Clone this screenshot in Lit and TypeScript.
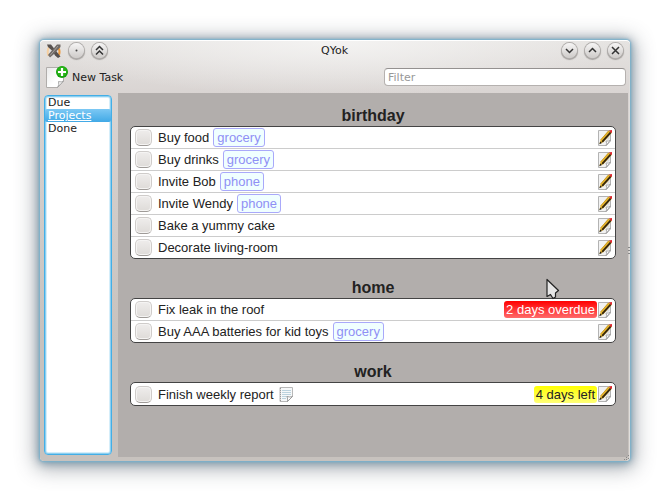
import { LitElement, html, css, svg, nothing } from "lit";
import { customElement, property, state } from "lit/decorators.js";
import { classMap } from "lit/directives/class-map.js";

interface Task {
  title: string;
  tag?: string;
  note?: boolean;
  due?: { text: string; level: "late" | "soon" };
}
interface Project {
  name: string;
  tasks: Task[];
}

const PROJECTS: Project[] = [
  {
    name: "birthday",
    tasks: [
      { title: "Buy food", tag: "grocery" },
      { title: "Buy drinks", tag: "grocery" },
      { title: "Invite Bob", tag: "phone" },
      { title: "Invite Wendy", tag: "phone" },
      { title: "Bake a yummy cake" },
      { title: "Decorate living-room" },
    ],
  },
  {
    name: "home",
    tasks: [
      { title: "Fix leak in the roof", due: { text: "2 days overdue", level: "late" } },
      { title: "Buy AAA batteries for kid toys", tag: "grocery" },
    ],
  },
  {
    name: "work",
    tasks: [{ title: "Finish weekly report", note: true, due: { text: "4 days left", level: "soon" } }],
  },
];

const appIcon = html`<svg class="app-icon" width="16" height="16" viewBox="0 0 16 16" aria-hidden="true">
  <path d="M3.500 3Q0.500 8 2.500 13" fill="none" stroke="#f6cfa0" stroke-width="2" />
  <path d="M12 4Q14.500 8 13 12" fill="none" stroke="#ee9a3c" stroke-width="2" />
  <path d="M1 1.500L5 1.500L14.500 13.500L12 15L9 12.500L6.500 8L2 4Z" fill="#57514e" />
  <path d="M14.500 1.500L11 1.500L2 12L4 14.500L8 11L14.500 4Z" fill="#6f6965" />
  <path d="M12 3L4 12.500" stroke="#a7a19d" stroke-width="1" />
</svg>`;

const newIcon = html`<svg width="24" height="24" viewBox="0 0 24 24" aria-hidden="true">
  <defs>
    <linearGradient id="pg" x1="0" y1="0" x2="1" y2="1">
      <stop offset="0" stop-color="#e9e9e9" /><stop offset=".6" stop-color="#fff" />
    </linearGradient>
  </defs>
  <path d="M0.500 2.500H17.500V16L11.500 22.500H0.500Z" fill="url(#pg)" stroke="#b0adab" />
  <path d="M11.500 22.500Q13.500 20 12.500 16.500Q15.500 17.500 17.500 16Z" fill="#f4f4f4" stroke="#999" stroke-width=".8" />
  <circle cx="16" cy="7" r="6" fill="#14a00c" />
  <circle cx="16" cy="6.500" r="5" fill="#35c21f" opacity=".6" />
  <path d="M16 3V11M12 7H20" stroke="#fff" stroke-width="2.200" />
</svg>`;

const editIcon = html`<svg width="16" height="18" viewBox="0 0 16 18" aria-hidden="true">
  <path d="M1.500 1.500H13.500V12L9.500 16.500H1.500Z" fill="#f2f2f2" stroke="#b3b3b3" />
  <path d="M9 16.500Q10.300 14.500 9 12Q12 12.500 13.500 11Z" fill="#fff" stroke="#999" stroke-width=".8" />
  <path d="M9 9.500L12.500 6V10.500H9Z" fill="#dcdcdc" />
  <path d="M11.500 1.500L15 3.500L6.500 13L2.500 15L3.500 11Z" fill="#e8b62c" />
  <path d="M13.700 3.300L5.200 12.800" stroke="#33260f" stroke-width="1.800" />
  <path d="M11.500 2L3.500 11" stroke="#c2931f" stroke-width=".8" />
  <path d="M3.200 12.500L2.300 15.300L5 14Z" fill="#222" />
  <path d="M12 1.500L15 1V3.500L14 4Z" fill="#e02630" />
</svg>`;

const noteIcon = html`<svg class="note" width="15" height="17" viewBox="0 0 15 17" role="img" aria-label="Has a note">
  <path d="M1 1.500H13.500V10.500L8.500 15.500H1Z" fill="#f6f8f9" stroke="#b8b8b8" />
  <path d="M3 4.500H12M3 6.500H12M3 8.500H12M3 10.500H8M3 12.500H7" stroke="#bcd3de" />
  <path d="M1.500 2V15.500" stroke="#999" stroke-dasharray="1 1" />
  <path d="M8.500 15.500Q9 13 8 10.500Q11 11.500 13.500 10.500Z" fill="#fff" stroke="#8a8a8a" stroke-width=".8" />
</svg>`;

const glyphs: Record<string, unknown> = {
  Menu: svg`<circle cx="8.500" cy="8.500" r="1" fill="#444" />`,
  Shade: svg`<path d="M5 8L8.500 4.500L12 8M5 12.500L8.500 9L12 12.500" />`,
  Minimize: svg`<path d="M5 7L8.500 10.500L12 7" />`,
  Maximize: svg`<path d="M5 10L8.500 6.500L12 10" />`,
  Close: svg`<path d="M5 5L12 12M12 5L5 12" />`,
};

@customElement("window-button")
export class WindowButton extends LitElement {
  @property() kind = "Close";
  static styles = css`
    :host { display: block; }
    button {
      display: block; width: 15px; height: 15px; padding: 0; border: 0; border-radius: 50%;
      background: linear-gradient(#f6f5f5, #cecbc9);
      box-shadow: 0 0 0 1px #b1aeac, 0 1px 1px 1px #a5a19f;
    }
    svg { display: block; width: 15px; height: 15px; fill: none; stroke: #333; stroke-width: 1.5; }
    .menu { stroke: none; }
  `;
  render() {
    return html`<button aria-label=${this.kind}>
      <svg class=${this.kind.toLowerCase()} viewBox="1 1 15 15" aria-hidden="true">${glyphs[this.kind]}</svg>
    </button>`;
  }
}

@customElement("task-row")
export class TaskRow extends LitElement {
  @property({ attribute: false }) task!: Task;
  static styles = css`
    :host { display: block; }
    .row { display: flex; align-items: center; height: 21px; padding: 0 2px 0 4px; }
    .row.tall { height: 22px; }
    label { display: flex; align-items: center; gap: 6px; white-space: pre; }
    input {
      appearance: none; box-sizing: border-box; width: 17px; height: 17px; margin: 0; border-radius: 5px;
      border: 1px solid #cfccca; border-bottom-color: #9f9b98;
      background: linear-gradient(#efedec, #dedbd8); box-shadow: inset 0 0 0 1px #f5f4f3;
    }
    .tag {
      box-sizing: border-box; height: 19px; margin-left: 4px; padding: 0 3px; line-height: 18px;
      color: #8f8ff5; background: #f0ffff; border: 1px solid #a9a9fa; border-radius: 3px;
      text-decoration: none;
    }
    .note { margin-left: 5px; }
    .due { margin-left: auto; height: 17px; padding: 0 2px; line-height: 17px; border-radius: 3px; }
    .late { color: #fff; background: linear-gradient(#f00, #ff6a6a); }
    .soon { color: #222; background: linear-gradient(#ff0, #ffff78); }
    .edit { display: block; margin-left: auto; padding: 0; border: 0; background: none; }
    .due + .edit { margin-left: 0; }
    .edit svg { display: block; }
  `;
  render() {
    const { title, tag, note, due } = this.task;
    return html`<div class=${classMap({ row: true, tall: !!note })}>
      <label><input type="checkbox" />${title}</label>
      ${tag ? html`<a class="tag" href="#${tag}">${tag}</a>` : nothing}
      ${note ? noteIcon : nothing}
      ${due ? html`<span class=${classMap({ due: true, [due.level]: true })}>${due.text}</span>` : nothing}
      <button class="edit" aria-label="Edit ${title}">${editIcon}</button>
    </div>`;
  }
}

@customElement("app-root")
export class AppRoot extends LitElement {
  @state() private view = "Projects";

  static styles = css`
    :host {
      display: flex; box-sizing: border-box; min-height: 100vh; padding: 40px; background: #fff;
      font: 11px/13px "DejaVu Sans", sans-serif; color: #222;
    }
    .window {
      position: relative; flex: 1; display: flex; flex-direction: column; min-width: 0;
      border-radius: 4px;
      background: radial-gradient(ellipse 300px 56px at 50% 0, #f4f3f2, transparent),
        linear-gradient(#e5e3e1, #d9d4d2 54px, #c7c2be 300px);
      box-shadow: inset 0 1px #fff, inset -1px 0 #e0dedc, 0 0 2px 1px #78b2ce, 0 1px 8px 1px #7896a8,
        0 3px 20px 5px rgba(70, 80, 90, 0.45);
    }
    .titlebar {
      display: grid; grid-template-columns: 1fr auto 1fr; align-items: center;
      height: 21px; padding: 0 7px 0 6px;
    }
    .side { display: flex; align-items: center; gap: 8px; }
    .side.end { justify-content: flex-end; }
    .app-icon { margin-right: -1px; }
    h1 { margin: 0; font: inherit; }
    .toolbar {
      display: flex; align-items: center; justify-content: space-between;
      height: 32px; padding: 0 4px 0 6px;
    }
    .new {
      display: flex; align-items: center; gap: 2px; padding: 0; border: 0; background: none;
      font: inherit; color: inherit;
    }
    .filter {
      box-sizing: border-box; width: 242px; height: 18px; padding: 0 3px; font: inherit; color: #222;
      background: #fff; border: 1px solid #b5b1af; border-top-color: #949190; border-radius: 4px;
      outline: 0;
    }
    .filter::placeholder { color: #989898; opacity: 1; }
    .body { flex: 1; display: flex; gap: 6px; padding: 0 2px 4px 4px; }
    nav {
      box-sizing: border-box; width: 68px; margin: 2px 0; background: #fff;
      border: 1px solid #43aee6; border-radius: 4px;
      box-shadow: inset 0 0 0 1px #8ccff0, inset 0 0 0 2px #d5eefa;
    }
    nav a { display: block; padding: 0 3px; color: #222; text-decoration: none; }
    nav a.on {
      color: #fff; text-decoration: underline; border-radius: 2px;
      background: linear-gradient(#7cc8f4, #41a9e6);
    }
    main {
      flex: 1; min-width: 0; padding: 12px 12px 0; background: #b2aeac;
      font: 13px/21px "Liberation Sans", sans-serif;
    }
    section { position: relative; margin-bottom: 18px; }
    h2 { margin: 0; font-size: 16px; line-height: 21px; text-align: center; }
    ul {
      margin: 0; padding: 0; list-style: none; background: #fff;
      border: 1px solid #444; border-radius: 5px;
    }
    li + li { border-top: 1px solid #ccc; }
    .pointer { position: absolute; top: 1px; right: 56px; }
    .splitter, .grip { position: absolute; fill: #888; }
    .splitter { right: 0; top: 207px; }
    .grip { right: 0; bottom: 0; }
  `;

  render() {
    return html`<div class="window">
      <header class="titlebar">
        <div class="side">
          ${appIcon}<window-button kind="Menu"></window-button><window-button kind="Shade"></window-button>
        </div>
        <h1>QYok</h1>
        <div class="side end">
          ${["Minimize", "Maximize", "Close"].map((k) => html`<window-button kind=${k}></window-button>`)}
        </div>
      </header>
      <div class="toolbar">
        <button class="new">${newIcon}New Task</button>
        <input class="filter" type="text" placeholder="Filter" aria-label="Filter" />
      </div>
      <div class="body">
        <nav>
          ${["Due", "Projects", "Done"].map(
            (v) => html`<a href="#${v}" class=${classMap({ on: v === this.view })} @click=${() => (this.view = v)}>${v}</a>`
          )}
        </nav>
        <main>
          ${PROJECTS.map(
            (p) => html`<section>
              <h2>${p.name}</h2>
              <ul>${p.tasks.map((t) => html`<li><task-row .task=${t}></task-row></li>`)}</ul>
              ${p.name === "home"
                ? html`<svg class="pointer" width="14" height="23" viewBox="0 0 14 23" aria-hidden="true">
                    <path d="M1 1.500V18.500L4.500 16.500L7 20.500L9.500 19L9.500 15L12.500 12.500Z"
                      fill="#e6e6e6" stroke="#222" stroke-width="1.200" stroke-linejoin="round" />
                  </svg>`
                : nothing}
            </section>`
          )}
        </main>
      </div>
      <svg class="splitter" width="2" height="8" viewBox="0 0 2 8" aria-hidden="true">
        <path d="M0 0H2V1H0ZM0 3H2V4H0ZM0 6H2V7H0Z" />
      </svg>
      <svg class="grip" width="7" height="7" viewBox="0 0 7 7" aria-hidden="true">
        <path d="M5 1H6V2H5ZM3 3H4V4H3ZM5 4H6V5H5ZM1 5H2V6H1ZM3 5H4V6H3Z" />
      </svg>
    </div>`;
  }
}
